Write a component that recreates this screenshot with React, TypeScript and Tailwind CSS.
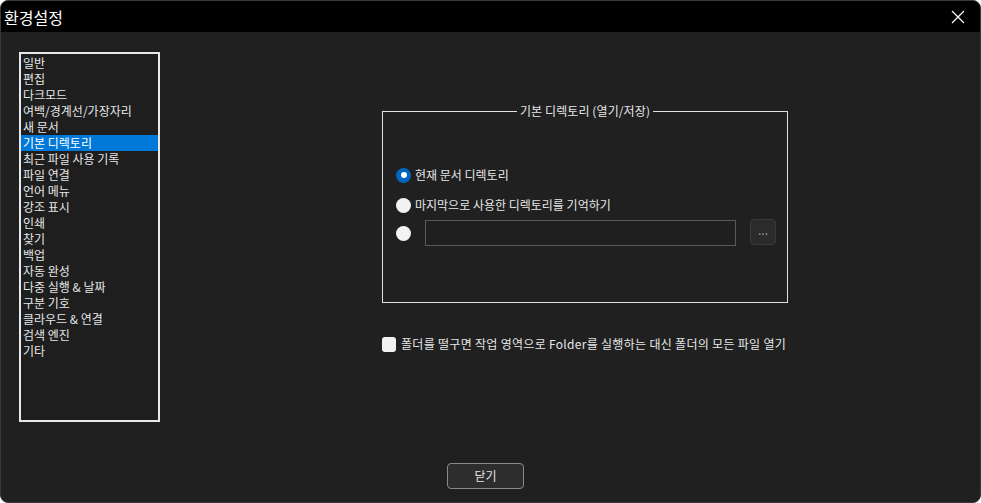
import React from 'react';

const items = [
  '일반',
  '편집',
  '다크모드',
  '여백/경계선/가장자리',
  '새 문서',
  '기본 디렉토리',
  '최근 파일 사용 기록',
  '파일 연결',
  '언어 메뉴',
  '강조 표시',
  '인쇄',
  '찾기',
  '백업',
  '자동 완성',
  '다중 실행 & 날짜',
  '구분 기호',
  '클라우드 & 연결',
  '검색 엔진',
  '기타',
];

const font = { fontFamily: '"Noto Sans CJK KR", "Noto Sans", sans-serif' };

const Radio: React.FC<{ checked?: boolean }> = ({ checked }) =>
  checked ? (
    <span className="flex h-[15px] w-[15px] items-center justify-center rounded-full bg-[#0067c0]">
      <span className="h-[6px] w-[6px] rounded-full bg-white" />
    </span>
  ) : (
    <span className="h-[15px] w-[15px] rounded-full bg-[#f2f2f2]" />
  );

export default function App() {
  const selected = 5;

  return (
    <div
      className="flex h-[503px] w-[981px] flex-col overflow-hidden rounded-[8px] border border-[#3a3a3a] bg-[#202020] text-[#e6e6e6]"
      style={font}
    >
      {/* title bar */}
      <div className="flex h-[31px] shrink-0 items-center justify-between bg-black pl-[3px] pr-[14px]">
        <span className="text-[16px] leading-none text-white">환경설정</span>
        <svg width="14" height="14" viewBox="0 0 14 14" className="mr-[1px]">
          <path d="M1 1L13 13M13 1L1 13" stroke="#ffffff" strokeWidth="1.2" />
        </svg>
      </div>

      <div className="flex flex-1 pl-[18px] pt-[20px]">
        {/* category list */}
        <div className="h-[370px] w-[141px] shrink-0 border-2 border-[#e8e8e8] bg-[#1e1e1e] pt-[1px]">
          {items.map((item, index) => (
            <div
              key={item}
              className={`h-[16px] pl-[2px] text-[12px] leading-[16px] ${
                index === selected ? 'bg-[#0078d7] text-white' : 'text-[#e6e6e6]'
              }`}
            >
              {item}
            </div>
          ))}
        </div>

        <div className="flex flex-col pl-[222px] pt-[59px]">
          {/* group box */}
          <div className="relative h-[192px] w-[406px] border border-[#e0e0e0]">
            <div className="absolute left-0 right-0 top-[-9px] flex justify-center">
              <span className="bg-[#202020] px-[3px] text-[12px] leading-[16px] tracking-[0.1px] text-[#e6e6e6]">
                기본 디렉토리 (열기/저장)
              </span>
            </div>

            <div className="flex flex-col pl-[13px] pt-[55px]">
              <div className="flex h-[16px] items-center gap-[4px]">
                <Radio checked />
                <span className="text-[12px]">현재 문서 디렉토리</span>
              </div>
              <div className="mt-[14px] flex h-[16px] items-center gap-[4px]">
                <Radio />
                <span className="text-[12px]">마지막으로 사용한 디렉토리를 기억하기</span>
              </div>
              <div className="mt-[7px] flex items-center">
                <Radio />
                <div className="ml-[14px] h-[26px] w-[311px] border border-[#5a5a5a] bg-[#1f1f1f]" />
                <div className="ml-[14px] mt-[-3px] flex h-[26px] w-[26px] items-center justify-center rounded-[4px] border border-[#3a3a3a] bg-[#2b2b2b] pb-[3px] text-[12px] text-[#9a9a9a]">
                  ...
                </div>
              </div>
            </div>
          </div>

          {/* checkbox */}
          <div className="mt-[32px] flex items-center gap-[5px]">
            <span className="h-[15px] w-[14px] rounded-[3px] bg-[#f2f2f2]" />
            <span className="text-[12px] tracking-[0.3px] text-[#e6e6e6]">
              폴더를 떨구면 작업 영역으로 Folder를 실행하는 대신 폴더의 모든 파일 열기
            </span>
          </div>
        </div>
      </div>

      {/* footer */}
      <div className="flex h-[39px] shrink-0 justify-center pr-[10px]">
        <button className="h-[26px] w-[77px] rounded-[4px] border border-[#8a8a8a] bg-[#2d2d2d] text-[12px] text-[#e6e6e6]">
          닫기
        </button>
      </div>
    </div>
  );
}
